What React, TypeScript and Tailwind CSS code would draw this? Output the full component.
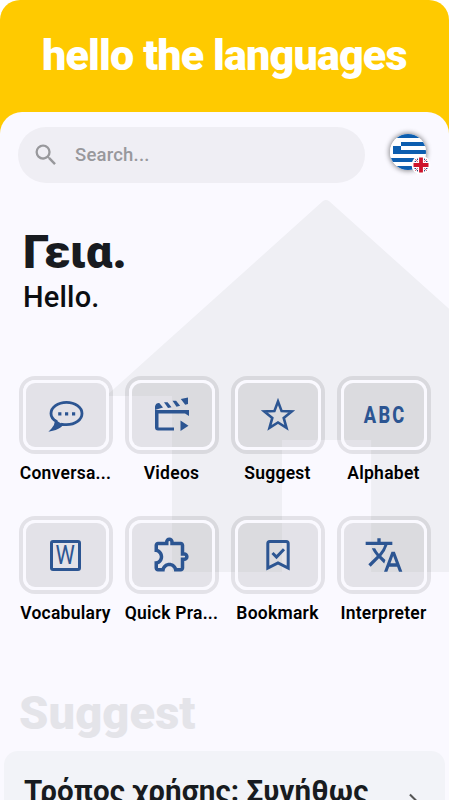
import type { ReactNode } from "react";
import { MdArrowForwardIos, MdOutlineExtension, MdSearch, MdTranslate } from "react-icons/md";

const ChatIcon = () => (
  <svg className="w-9 h-9" viewBox="0 0 36 36" fill="none">
    <path
      d="M8.200 24.300C4.800 22.300 3 19.600 3 16.500C3 10.200 9.800 5.300 18.500 5.300S34 10.200 34 16.500S27.200 27.700 18.500 27.700c-1.600 0-3-.1-4.400-.4C11.500 30 8.500 31.700 4.500 32.500c2.300-2.400 3.700-5 3.700-8.200z"
      stroke="currentColor"
      strokeWidth="2.800"
    />
    <path d="M9 24l5 3-5 4-5 1.500z" fill="currentColor" />
    <path d="M10.200 15.200h3.200v3.200h-3.200zM17 15.200h3.200v3.200H17zM24 15.200h3.200v3.200H24z" fill="currentColor" />
  </svg>
);

const VideoIcon = () => (
  <svg className="w-9 h-9" viewBox="0 0 36 36" fill="currentColor">
    <path d="M1 13V9.500C1.500 7 3.500 5.800 5.500 6.200L9 10.500zM10 5.200h3.600l4 5-3.600.9zM18.500 3.800h3.600l4 5-3.600.9zM26.800 2l7.200-1.500V7l-2.800.8z" />
    <path d="M1 13h34v6l-4-2.500H4.500V30.500H20v3H4c-2 0-3-1-3-3zM26.500 23.500v10.500l8-5.300z" />
  </svg>
);

const StarIcon = () => (
  <svg className="w-9 h-9" viewBox="0 0 36 36" fill="none" stroke="currentColor" strokeWidth="2.600">
    <path d="M18 4.500l3.600 9.600 10.100.4-8 6.400 2.800 10L18 25.500l-8.500 5.400 2.800-10-8-6.400 10.100-.4z" />
  </svg>
);

const BookmarkIcon = () => (
  <svg className="w-9 h-9" viewBox="0 0 36 36" fill="none" stroke="currentColor" strokeWidth="3">
    <path d="M7.800 31V6.500Q7.800 4.500 9.800 4.500h16.400Q28.200 4.500 28.200 6.500V31L18 26z" />
    <path d="M12.500 16l4 4 7.500-7.800" />
  </svg>
);

const WordIcon = () => (
  <div className="w-[31px] h-[31px] border-[3px] border-current rounded-[3px] flex items-center justify-center">
    <span className="text-[25px] leading-none scale-x-[0.87]">W</span>
  </div>
);

const AbcIcon = () => (
  <div className="mr-[-3px] text-[24px] leading-none font-extrabold tracking-[3px] scale-x-[0.76]">ABC</div>
);

const items: { label: string; icon: ReactNode }[] = [
  { label: "Conversa...", icon: <ChatIcon /> },
  { label: "Videos", icon: <VideoIcon /> },
  { label: "Suggest", icon: <StarIcon /> },
  { label: "Alphabet", icon: <AbcIcon /> },
  { label: "Vocabulary", icon: <WordIcon /> },
  { label: "Quick Pra...", icon: <MdOutlineExtension className="w-[42px] h-[42px] mb-[2px]" /> },
  { label: "Bookmark", icon: <BookmarkIcon /> },
  { label: "Interpreter", icon: <MdTranslate className="w-10 h-10" /> },
];

const Flags = () => (
  <div className="relative w-9 h-9 rounded-full shadow-[0_0_5px_1px_rgba(0,0,0,0.45)]">
    <svg className="w-9 h-9 rounded-full" viewBox="0 0 36 36">
      <path fill="#fff" d="M0 0h36v36H0z" />
      <path
        fill="#0d5eaf"
        d="M0 0h36v4H0zM11 8h25v4H11zM3 12h8v8H3zM11 16h25v4H11zM0 24h36v4H0zM0 32h36v4H0z"
      />
    </svg>
    {/* Native language badge */}
    <svg className="absolute left-[21px] top-[21px] w-5 h-5 rounded-full" viewBox="0 0 20 20">
      <circle cx="10" cy="10" r="9.500" fill="#fff" />
      <circle cx="10" cy="10" r="7.300" fill="#012169" />
      <path stroke="#fff" strokeWidth="2.400" d="M4 4l12 12M16 4L4 16" />
      <path stroke="#c8102e" strokeWidth=".6" d="M4 4l12 12M16 4L4 16" />
      <path stroke="#fff" strokeWidth="6" d="M10 2v16M2 10h16" />
      <path stroke="#cf142b" strokeWidth="3.800" d="M10 2.500v15M2.500 10h15" />
    </svg>
  </div>
);

export default function App() {
  return (
    <div className="w-[450px] h-[800px] overflow-hidden bg-white font-[Roboto,sans-serif]">
      <div className="w-[449px] h-[800px] overflow-hidden rounded-t-[20px] bg-[#ffca00]">
        <h1 className="h-[112px] pt-[29px] pl-[42px] whitespace-nowrap text-[43px] leading-[52px] font-black tracking-[-0.830px] text-white">
          hello the languages
        </h1>

        <main className="relative isolate h-[688px] overflow-hidden rounded-t-[22px] bg-[#faf9ff]">
          {/* House behind the menu */}
          <svg className="absolute -z-10 left-[62px] top-[20px] w-[528px] h-[528px]" viewBox="0 0 24 24">
            <path fill="#efeff4" d="M10 20v-6h4.050v6h4.950v-8h3L12.150 3.150q-.150-.120-.300 0L2 12h3v8z" />
          </svg>

          {/* Search */}
          <div className="flex items-center pt-[15px] pl-[18px]">
            <div className="flex items-center w-[347px] h-14 rounded-full bg-[#efeef4] pl-[14px] text-[#98989c]">
              <MdSearch className="w-7 h-7" />
              <span className="ml-[15px] pt-px text-[18.500px] font-medium tracking-[0.200px]">Search...</span>
            </div>
            <div className="ml-[25px] -mt-[6px]">
              <Flags />
            </div>
          </div>

          {/* Greeting */}
          <div className="pt-[41px] pl-[23px] h-[193px]">
            <div className="text-[47px] leading-[56px] font-black text-[#181b20]">Γεια.</div>
            <div className="text-[29px] leading-[34px] font-medium tracking-[0.200px] text-[#0c0e11]">Hello.</div>
          </div>

          {/* Menu */}
          <div className="grid grid-cols-[repeat(4,106px)] gap-y-[28px] ml-[12.500px]">
            {items.map((item) => (
              <div key={item.label} className="flex flex-col items-center h-[112px]">
                <div className="w-[94px] h-[78px] rounded-[16px] border-4 border-black/9">
                  <div className="h-full rounded-[12px] border-[3px] border-[#faf9ff] bg-[#faf9ff]/20">
                    <div className="h-full rounded-[9px] bg-black/9 flex items-center justify-center text-[#2c5592]">
                      {item.icon}
                    </div>
                  </div>
                </div>
                <div className="mt-[8px] whitespace-nowrap text-center text-[17.500px] leading-[22px] font-semibold tracking-[0.250px] text-black">
                  {item.label}
                </div>
              </div>
            ))}
          </div>

          {/* Suggestions */}
          <h2 className="mt-[57px] pl-[19px] text-[47px] leading-[56px] font-black tracking-[0.100px] text-[#e4e4e9]">
            Suggest
          </h2>
          <div className="flex justify-between mt-[10px] ml-1 mr-1 h-[120px] rounded-[14px] bg-[#f2f3f8] pt-[23px] pl-[20px] pr-[21px]">
            <div className="whitespace-nowrap text-[29.500px] leading-[34px] font-bold tracking-[0.100px] text-[#181b20]">
              Τρόπος χρήσης: Συνήθως
            </div>
            <MdArrowForwardIos className="mt-[18px] w-5 h-5 text-[#555]" />
          </div>
        </main>
      </div>
    </div>
  );
}
